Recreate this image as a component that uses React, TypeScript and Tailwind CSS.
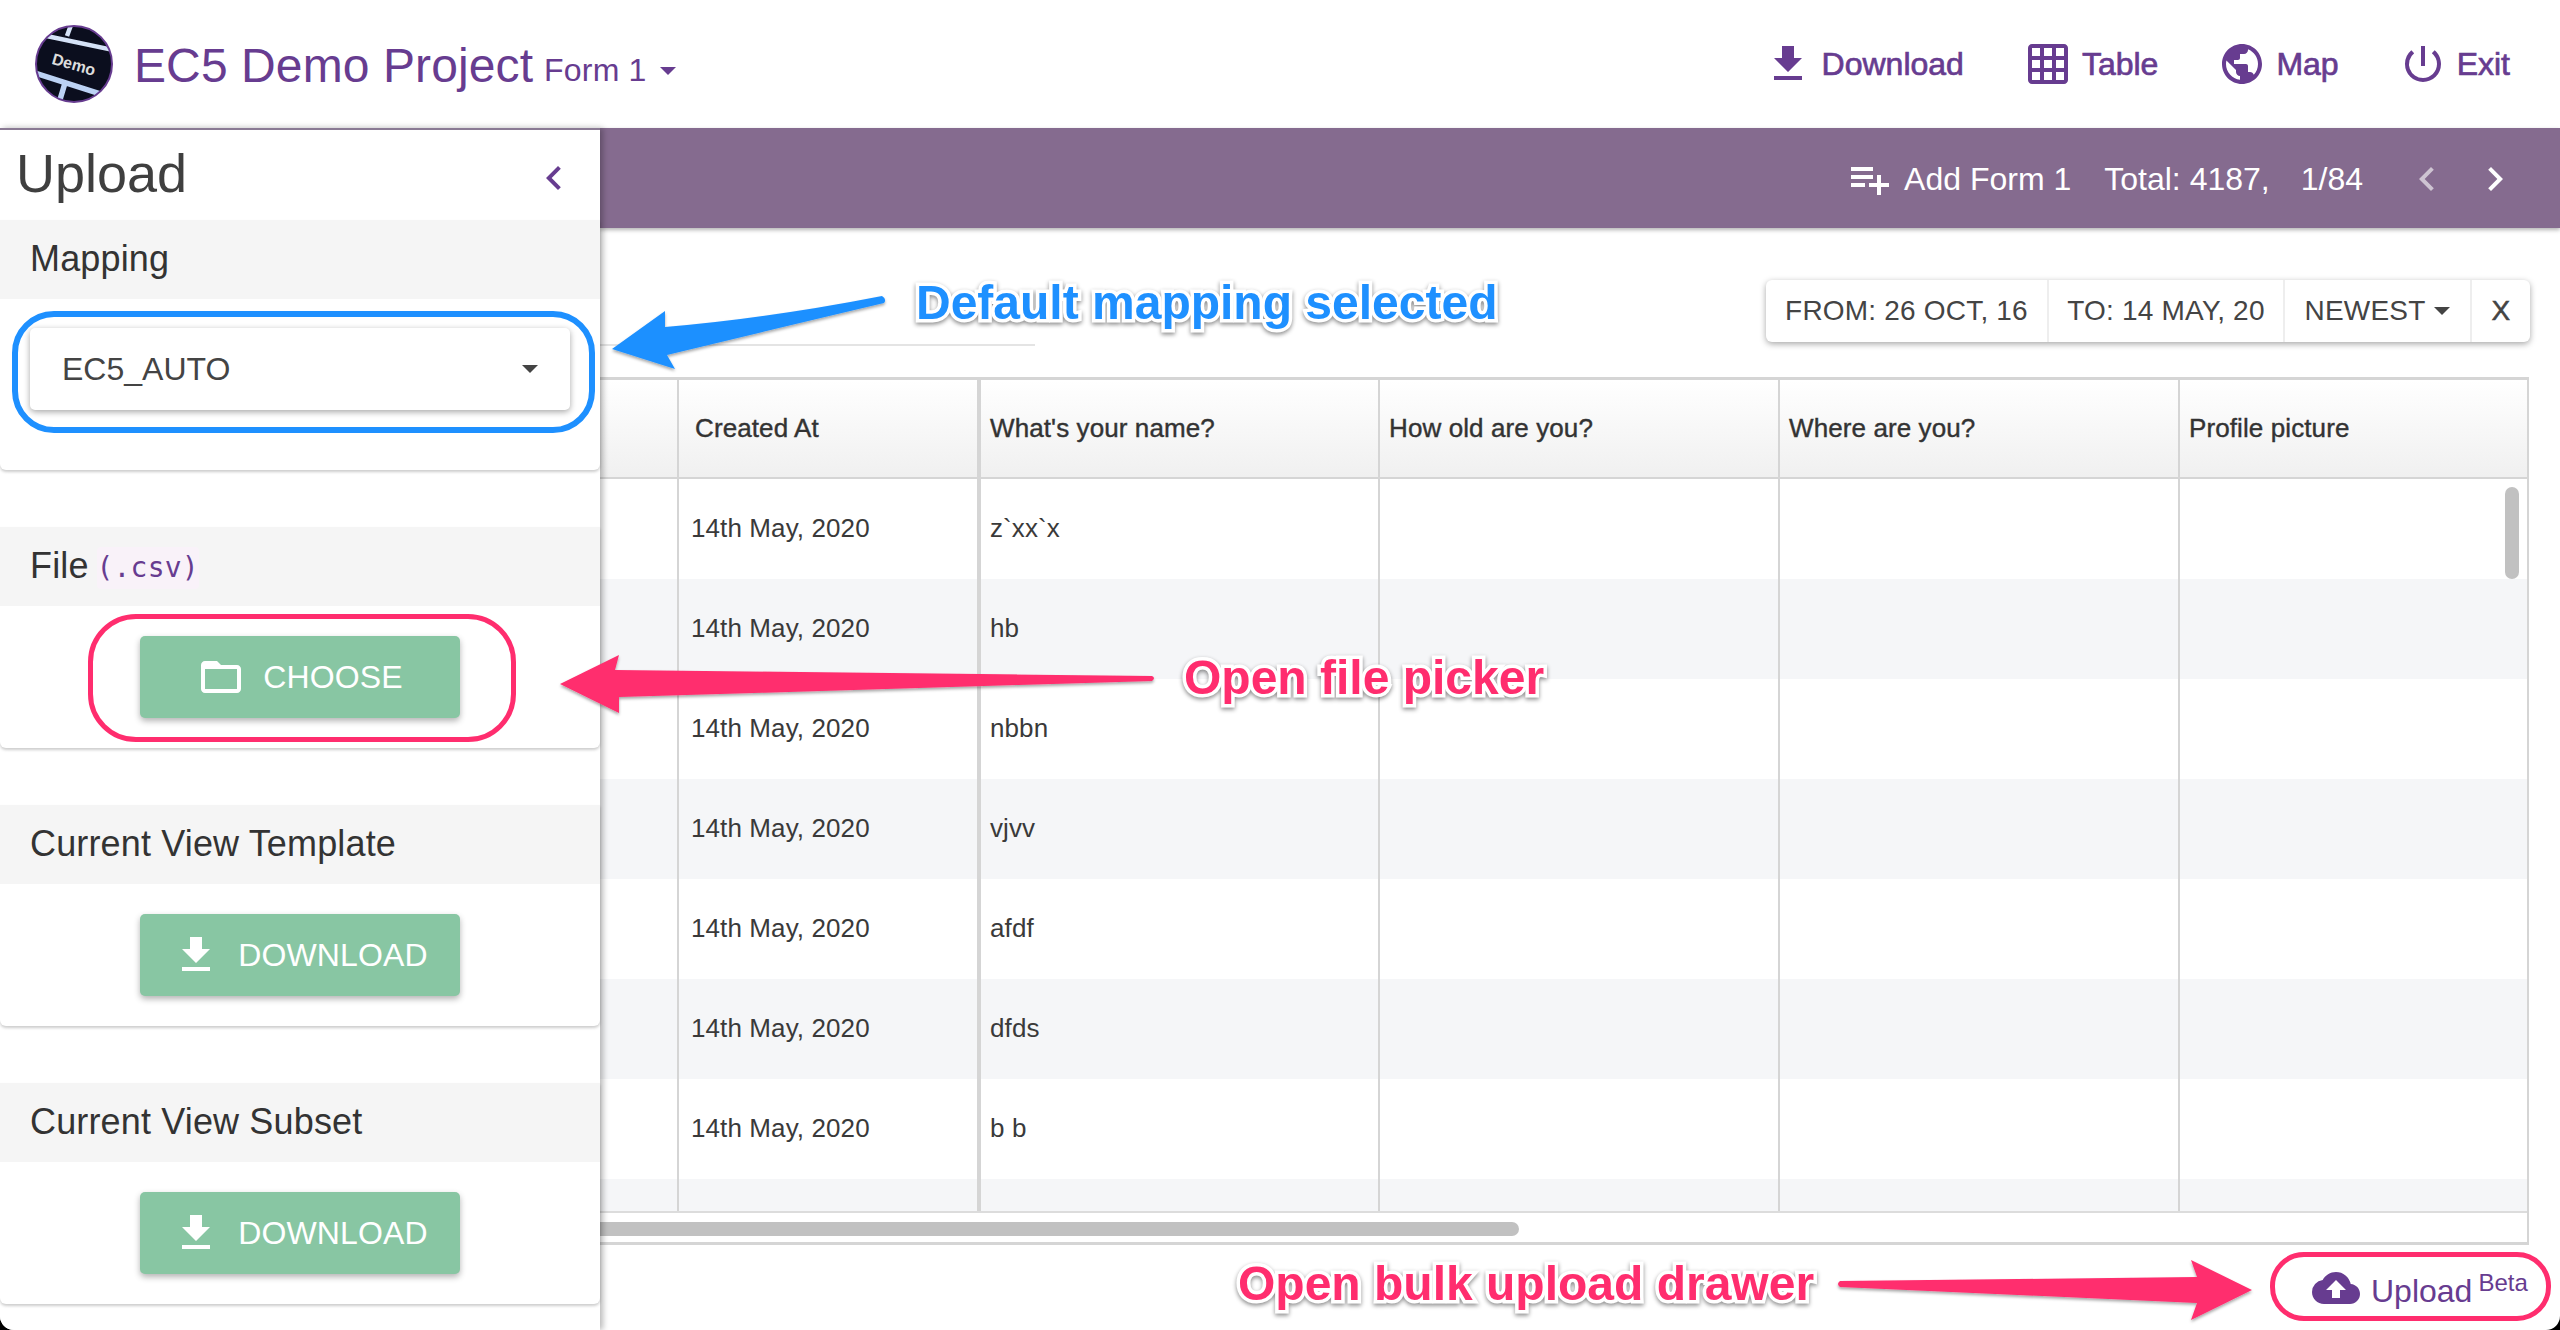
import React from 'react';
import {
  MdFileDownload,
  MdGridOn,
  MdPublic,
  MdPowerSettingsNew,
  MdPlaylistAdd,
  MdChevronLeft,
  MdChevronRight,
  MdFolderOpen,
  MdCloudUpload,
} from 'react-icons/md';

const rows = ['z`xx`x', 'hb', 'nbbn', 'vjvv', 'afdf', 'dfds', 'b b', ''];
const columns = ['Created At', "What's your name?", 'How old are you?', 'Where are you?', 'Profile picture'];

const Caret = ({ className }: { className: string }) => (
  <span className={`inline-block border-x-[8px] border-t-[8px] border-x-transparent ${className}`} />
);

const Logo = () => (
  <svg width="78" height="78" viewBox="0 0 78 78">
    <defs>
      <clipPath id="logo-clip">
        <circle cx="39" cy="39" r="38" />
      </clipPath>
    </defs>
    <g clipPath="url(#logo-clip)">
      <rect width="78" height="78" fill="#0b0e1e" />
      <path d="M2 9 L78 25 M36 0 L32 11" stroke="#d5e2f7" strokeWidth="4.5" fill="none" />
      <path d="M0 48 L78 73 M30 58 L24 78" stroke="#bcd2f4" strokeWidth="5.5" fill="none" />
      <text x="39" y="45" textAnchor="middle" fontSize="16" fontWeight="700" fill="#dcdcdc" transform="rotate(16 39 39)" fontFamily="Liberation Sans">
        Demo
      </text>
    </g>
    <circle cx="39" cy="39" r="38" fill="none" stroke="#673c90" strokeWidth="2" />
  </svg>
);

const NavItem = ({ icon, label }: { icon: React.ReactNode; label: string }) => (
  <a className="flex items-center gap-[10px] text-[32px] text-[#673c90] [-webkit-text-stroke:0.7px_#673c90]">
    {icon}
    <span>{label}</span>
  </a>
);

const SectionHeader = ({ children }: { children: React.ReactNode }) => (
  <div className="flex h-[79px] items-center bg-[#f5f5f5] pb-[2px] pl-[30px] text-[36px] tracking-[0.15px] text-[#333]">{children}</div>
);

const GreenButton = ({ icon, label, gap }: { icon: React.ReactNode; label: string; gap: string }) => (
  <button className={`flex h-[82px] w-[320px] items-center justify-center rounded-[5px] bg-[#88c6a3] text-[32px] tracking-[0.1px] text-white shadow-[0_3px_6px_rgba(0,0,0,0.3)] ${gap}`}>
    {icon}
    <span>{label}</span>
  </button>
);

const Panel = ({ title, label }: { title: string; label: string }) => (
  <section className="mt-[57px] rounded-b-[6px] shadow-[0_2px_3px_rgba(0,0,0,0.2)]">
    <SectionHeader>{title}</SectionHeader>
    <div className="flex justify-center pb-[30px] pt-[30px]">
      <GreenButton icon={<MdFileDownload size={48} />} label={label} gap="gap-[18px]" />
    </div>
  </section>
);

const Note = ({ className, children }: { className: string; children: React.ReactNode }) => (
  <div className={`absolute z-30 whitespace-nowrap font-bold leading-none [-webkit-text-stroke:7px_white] [paint-order:stroke_fill] [filter:drop-shadow(0_2px_2px_rgba(0,0,0,0.45))] ${className}`}>
    {children}
  </div>
);

const App = () => {
  return (
    <div className="h-screen w-full overflow-hidden bg-black font-['Liberation_Sans',Arial,sans-serif]">
      <div className="relative flex h-full flex-col overflow-hidden rounded-b-[14px] bg-white">
        {/* Top navbar */}
        <header className="flex h-[128px] shrink-0 items-center justify-between pl-[35px] pr-[50px]">
          <div className="flex items-center">
            <Logo />
            <span className="ml-[21px] mt-[3px] text-[48px] tracking-[0.1px] text-[#673c90]">EC5 Demo Project</span>
            <span className="ml-[11px] mt-[11px] text-[32px] tracking-[0.2px] text-[#673c90]">Form 1</span>
            <Caret className="ml-[13px] mt-[14px] border-t-[#673c90]" />
          </div>
          <nav className="flex items-center gap-[60px]">
            <NavItem icon={<MdFileDownload size={48} />} label="Download" />
            <NavItem icon={<MdGridOn size={48} />} label="Table" />
            <NavItem icon={<MdPublic size={48} />} label="Map" />
            <NavItem icon={<MdPowerSettingsNew size={48} />} label="Exit" />
          </nav>
        </header>

        <div className="flex min-h-0 flex-1">
          {/* Upload drawer */}
          <aside className="z-10 w-[600px] shrink-0 border-t-2 border-[#8a7a94] bg-white shadow-[3px_0_6px_rgba(0,0,0,0.28)]">
            <div className="flex h-[90px] items-center justify-between pl-[16px] pr-[22px]">
              <h2 className="mb-[3px] text-[54px] text-[#3f3f3f]">Upload</h2>
              <MdChevronLeft size={48} className="mt-[5px] text-[#673c90]" />
            </div>

            <section className="rounded-b-[6px] shadow-[0_2px_3px_rgba(0,0,0,0.2)]">
              <SectionHeader>Mapping</SectionHeader>
              <div className="pb-[60px] pl-[30px] pr-[30px] pt-[29px]">
                <div className="relative flex h-[82px] items-center justify-between rounded-[5px] bg-white pl-[32px] pr-[32px] text-[32px] text-[#444] shadow-[0_2px_6px_rgba(0,0,0,0.35)]">
                  <span>EC5_AUTO</span>
                  <Caret className="border-t-[#444]" />
                  <div className="absolute bottom-[-23px] left-[-18px] right-[-25px] top-[-17px] rounded-[42px] border-[6px] border-[#1e90ff]" />
                </div>
              </div>
            </section>

            <section className="mt-[57px] rounded-b-[6px] shadow-[0_2px_3px_rgba(0,0,0,0.2)]">
              <SectionHeader>
                File
                <code className="ml-[8px] mt-[4px] rounded-[4px] bg-[#f9f2f9] font-['DejaVu_Sans_Mono',monospace] text-[28px] text-[#673c90]">(.csv)</code>
              </SectionHeader>
              <div className="flex justify-center pb-[30px] pt-[30px]">
                <div className="relative">
                  <GreenButton icon={<MdFolderOpen size={48} />} label="CHOOSE" gap="gap-[18px]" />
                  <div className="absolute bottom-[-24px] left-[-52px] right-[-56px] top-[-22px] rounded-[48px] border-[5px] border-[#ff2d6e]" />
                </div>
              </div>
            </section>

            <Panel title="Current View Template" label="DOWNLOAD" />
            <Panel title="Current View Subset" label="DOWNLOAD" />
          </aside>

          {/* Entries table */}
          <main className="flex min-w-0 flex-1 flex-col">
            <div className="flex h-[100px] shrink-0 items-center justify-end bg-[#856b8f] pr-[41px] pt-[2px] text-[32px] text-white shadow-[0_2px_4px_rgba(0,0,0,0.3)]">
              <MdPlaylistAdd size={48} />
              <span className="ml-[11px]">Add Form 1</span>
              <span className="ml-[33px]">Total: 4187,</span>
              <span className="ml-[31px]">1/84</span>
              <MdChevronLeft size={48} className="ml-[40px] text-white/60" />
              <MdChevronRight size={48} className="ml-[20px]" />
            </div>

            <div className="mr-[30px] mt-[52px] flex justify-end">
              <div className="flex h-[62px] items-center rounded-[6px] bg-white text-[28px] tracking-[0.2px] text-[#444] shadow-[0_2px_6px_rgba(0,0,0,0.35)]">
                <span className="flex h-full w-[283px] items-center justify-center border-r-2 border-[#eee]">FROM: 26 OCT, 16</span>
                <span className="flex h-full w-[236px] items-center justify-center border-r-2 border-[#eee]">TO: 14 MAY, 20</span>
                <span className="flex h-full w-[187px] items-center justify-center gap-[9px] border-r-2 border-[#eee]">
                  NEWEST
                  <Caret className="border-t-[#444]" />
                </span>
                <span className="flex h-full w-[58px] items-center justify-center [-webkit-text-stroke:0.5px_#444]">X</span>
              </div>
            </div>
            <div className="mt-[2px] h-[2px] w-[435px] bg-[#e4e4e4]" />

            <div className="relative mr-[31px] mt-[31px] h-[868px] border-b-[3px] border-r-2 border-t-[3px] border-[#d5d5d5]">
              <div className="grid h-[99px] grid-cols-[79px_302px_399px_400px_400px_1fr] border-b-2 border-[#d5d5d5] bg-gradient-to-b from-white to-[#f0f0f0] text-[26px] tracking-[0.1px] text-[#333] [-webkit-text-stroke:0.4px_#333]">
                <div className="border-r-2 border-[#d5d5d5]" />
                {columns.map((c, i) => (
                  <div key={c} className={`flex items-center border-[#d5d5d5] ${i === 0 ? 'border-r-4 pl-[16px]' : 'border-r-2 pl-[9px]'} last:border-r-0`}>
                    {c}
                  </div>
                ))}
              </div>
              <div className="h-[734px] overflow-hidden border-b-2 border-[#dcdcdc]">
                {rows.map((name, i) => (
                  <div key={i} className={`grid h-[100px] grid-cols-[79px_302px_399px_400px_400px_1fr] text-[26px] tracking-[0.1px] text-[#3a3a3a] ${i % 2 === 1 ? 'bg-[#f5f6f8]' : 'bg-white'}`}>
                    <div className="border-r-2 border-[#d5d5d5]" />
                    <div className="flex items-center border-r-4 border-[#d5d5d5] pb-[2px] pl-[12px]">{i < 7 ? '14th May, 2020' : ''}</div>
                    <div className="flex items-center border-r-2 border-[#d5d5d5] pb-[2px] pl-[9px]">{name}</div>
                    <div className="border-r-2 border-[#d5d5d5]" />
                    <div className="border-r-2 border-[#d5d5d5]" />
                    <div />
                  </div>
                ))}
              </div>
              <div className="mt-[9px] h-[14px] w-[919px] rounded-r-[7px] bg-[#c1c1c1]" />
              <div className="absolute right-[8px] top-[107px] h-[92px] w-[14px] rounded-[7px] bg-[#c1c1c1]" />
            </div>

            <div className="mr-[9px] mt-[7px] flex justify-end">
              <button className="flex h-[69px] w-[281px] items-center rounded-[34px] border-[5px] border-[#ff2d6e] pl-[37px] text-[#673c90]">
                <MdCloudUpload size={48} className="mt-[2px]" />
                <span className="ml-[11px] mt-[8px] text-[32px]">Upload</span>
                <span className="mb-[8px] ml-[6px] text-[24px]">Beta</span>
              </button>
            </div>
          </main>
        </div>

        {/* Annotations laid over the page */}
        <svg className="pointer-events-none absolute left-0 top-0 z-20" width="2560" height="1330" viewBox="0 0 2560 1330">
          <defs>
            <filter id="arrow-shadow" x="-5%" y="-20%" width="110%" height="140%">
              <feDropShadow dx="0" dy="2" stdDeviation="1.5" floodColor="#000" floodOpacity="0.35" />
            </filter>
          </defs>
          <path d="M612 349 L665 311 L665 327 Q770 318 882 296 Q887 299 884 303 Q770 330 667 355 L675 369 Z" fill="#1e90ff" filter="url(#arrow-shadow)" />
          <path d="M560 684 L619 655 L615 670 L1152 676 Q1156 678 1152 681 L619 697 L619 713 Z" fill="#ff2d6e" filter="url(#arrow-shadow)" />
          <path d="M1840 1281 L2197 1277 L2191 1260 L2252 1290 L2191 1320 L2197 1303 L1840 1287 Q1836 1284 1840 1281 Z" fill="#ff2d6e" filter="url(#arrow-shadow)" />
        </svg>
        <Note className="left-[916px] top-[279px] text-[48px] text-[#1e90ff]">Default mapping selected</Note>
        <Note className="left-[1184px] top-[654px] text-[48px] text-[#ff2d6e]">Open file picker</Note>
        <Note className="left-[1238px] top-[1260px] text-[48px] text-[#ff2d6e]">Open bulk upload drawer</Note>
      </div>
    </div>
  );
};

export default App;
